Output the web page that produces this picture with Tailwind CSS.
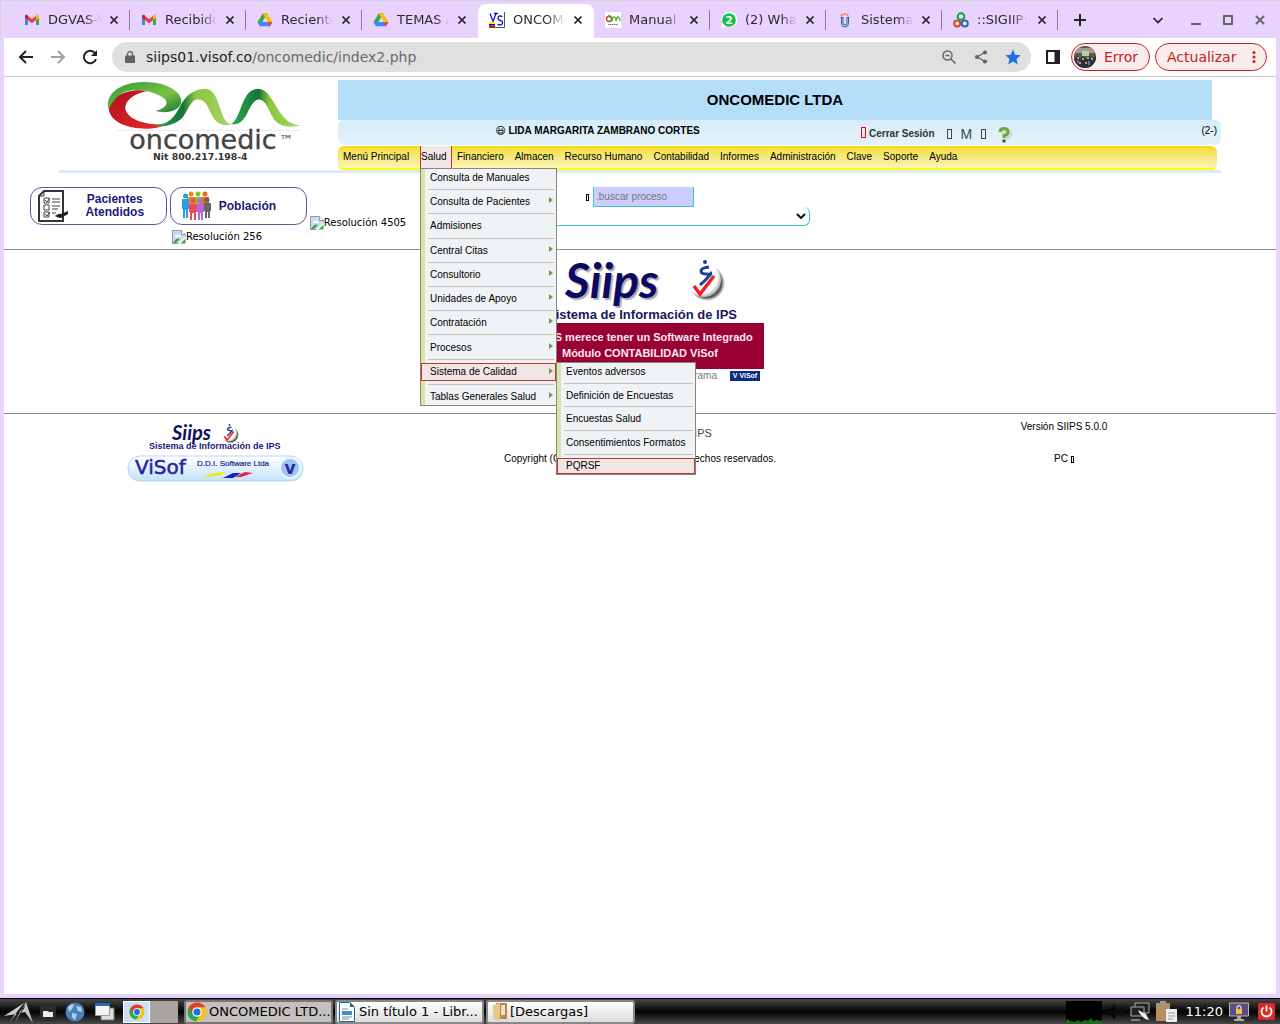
<!DOCTYPE html>
<html lang="es">
<head>
<meta charset="utf-8">
<meta name="viewport" content="width=device-width, initial-scale=1">
<title>ONCOMEDIC LTDA</title>
<script src="https://cdn.jsdelivr.net/npm/@tailwindcss/browser@4"></script>
</head>
<body class="min-h-screen flex flex-col bg-[#e8d3ff] font-['DejaVu_Sans',sans-serif] text-black">

<!-- Shared symbols -->
<svg class="absolute size-0" aria-hidden="true">
  <defs>
    <linearGradient id="gTop" x1="0" y1="0" x2="1" y2="1"><stop offset="0" stop-color="#2f9a3c"/><stop offset=".6" stop-color="#7cc242"/><stop offset="1" stop-color="#15763a"/></linearGradient>
    <linearGradient id="gRed" x1="0" y1="0" x2="1" y2="1"><stop offset="0" stop-color="#a8141c"/><stop offset="1" stop-color="#f0252c"/></linearGradient>
    <linearGradient id="gWave" x1="0" y1="0" x2="1" y2="0"><stop offset="0" stop-color="#2fae4a"/><stop offset=".4" stop-color="#14743a"/><stop offset=".55" stop-color="#8cc63f"/><stop offset="1" stop-color="#a9d468"/></linearGradient>
    <radialGradient id="gBall" cx=".4" cy=".4" r=".65"><stop offset=".75" stop-color="#fff"/><stop offset="1" stop-color="#999"/></radialGradient>
    <radialGradient id="gShade"><stop offset=".8" stop-color="#555"/><stop offset="1" stop-color="#555" stop-opacity="0"/></radialGradient>
    <linearGradient id="gPill" x1="0" y1="0" x2="0" y2="1"><stop offset="0" stop-color="#fff"/><stop offset="1" stop-color="#c3e2fb"/></linearGradient>
    <symbol id="gmail" viewBox="0 0 16 16"><path d="M1 4v9h3V8z" fill="#4285f4"/><path d="M12 8v5h3V4z" fill="#34a853"/><path d="M12 4v4l3-2.300V4.200C15 2.500 13.200 2 12 3z" fill="#fbbc04"/><path d="M4 4l4 3 4-3v4.200L8 11.200 4 8.200z" fill="#ea4335"/><path d="M1 4.200v1.600L4 8V3.600C2.800 2 1 2.500 1 4.200z" fill="#c5221f"/></symbol>
    <symbol id="drive" viewBox="0 0 16 16"><path d="M5.600 1.500h4.800L5.500 10 3 14 .6 10z" fill="#34a853"/><path d="M5.600 1.500h4.800l5 8.500h-4.600z" fill="#fbbc04"/><path d="M.6 10h14.800L13 14.300H3z" fill="#4285f4"/><path d="M10.800 10h4.600L13 14.300z" fill="#ea4335"/><path d="M8 5.800l2.500 4.200h-5z" fill="#e8d3ff"/></symbol>
    <symbol id="close" viewBox="0 0 10 10"><path d="M1.500 1.500l7 7M8.500 1.500l-7 7" stroke="#202124" stroke-width="1.700"/></symbol>
    <symbol id="chrome" viewBox="0 0 20 20"><circle cx="10" cy="10" r="9.500" fill="#fbc116"/><path d="M10 10L1.800 5.200A9.500 9.500 0 0 0 9 19.500L13.500 12z" fill="#2da94f"/><path d="M1.800 5.200A9.500 9.500 0 0 1 18.200 5.200H10L6 12z" fill="#e33b2e"/><circle cx="10" cy="10" r="4.800" fill="#fff"/><circle cx="10" cy="10" r="3.600" fill="#1a73e8"/></symbol>
    <symbol id="broken" viewBox="0 0 14 14"><path d="M.5.5h9l4 4v9H.5z" fill="#c6dcf7" stroke="#999"/><path d="M9.500.5v4h4" fill="#fff" stroke="#999"/><path d="M3 7q0-2 2-2 2-1 3 1 1 0 1 1z" fill="#fff"/><path d="M1 13q3-6 7-4l-4 4z" fill="#4ba13c"/><path d="M14 6L6 14h8z" fill="#fff"/><path d="M8.500 13.500h5v-5z" fill="#4ba13c"/></symbol>
    <symbol id="ball" viewBox="0 0 40 44"><circle cx="22" cy="25" r="18" fill="url(#gShade)"/><circle cx="19" cy="22" r="17" fill="url(#gBall)"/><circle cx="20" cy="4" r="2" fill="#1d3f94"/><path d="M24 9q-8 1-8 4t6 3-7 11M24 18q3-2 1-4" fill="none" stroke="#1d3f94" stroke-width="3"/><path d="M9 28l6 8 14-18" fill="none" stroke="#ee2024" stroke-width="3.500"/></symbol>
    <symbol id="arrow" viewBox="0 0 4 6"><path d="M0 0l4 3-4 3z" fill="#6d9c4a"/></symbol>
  </defs>
</svg>

<!-- Tab strip -->
<header class="flex h-[38px] border-t border-l border-[#d4d4d8] pl-[13px] text-[13px] text-[#2c2830]">
  <div class="flex h-[37px] grow items-center">
    <div class="flex h-10 w-[116px] items-center pl-[10px] relative"><svg class="size-4 shrink-0"><use href="#gmail"/></svg><span class="ml-2 w-[53px] overflow-hidden whitespace-nowrap [mask-image:linear-gradient(to_right,black_70%,transparent)]">DGVAS-V</span><button aria-label="Cerrar pestaña" class="ml-2"><svg class="size-[10px]"><use href="#close"/></svg></button><i class="absolute right-0 h-5 w-px bg-[#8a7a98]"></i></div>
    <div class="flex h-10 w-[116px] items-center pl-[11px] relative"><svg class="size-4 shrink-0"><use href="#gmail"/></svg><span class="ml-2 w-[52px] overflow-hidden whitespace-nowrap [mask-image:linear-gradient(to_right,black_70%,transparent)]">Recibido</span><button aria-label="Cerrar pestaña" class="ml-2"><svg class="size-[10px]"><use href="#close"/></svg></button><i class="absolute right-0 h-5 w-px bg-[#8a7a98]"></i></div>
    <div class="flex h-10 w-[116px] items-center pl-[11px] relative"><svg class="size-4 shrink-0"><use href="#drive"/></svg><span class="ml-2 w-[52px] overflow-hidden whitespace-nowrap [mask-image:linear-gradient(to_right,black_70%,transparent)]">Reciente</span><button aria-label="Cerrar pestaña" class="ml-2"><svg class="size-[10px]"><use href="#close"/></svg></button><i class="absolute right-0 h-5 w-px bg-[#8a7a98]"></i></div>
    <div class="flex h-10 w-[116px] items-center pl-[11px] relative"><svg class="size-4 shrink-0"><use href="#drive"/></svg><span class="ml-2 w-[52px] overflow-hidden whitespace-nowrap [mask-image:linear-gradient(to_right,black_75%,transparent)]">TEMAS A</span><button aria-label="Cerrar pestaña" class="ml-2"><svg class="size-[10px]"><use href="#close"/></svg></button></div>
    <div class="flex h-[34px] w-[116px] items-center self-end rounded-t-lg bg-white pl-[11px] pb-[2px]"><svg class="size-4 shrink-0" viewBox="0 0 16 16"><path d="M15.500 0v15.500H0" fill="none" stroke="#555"/><path d="M1 1.500l3 8 3-8M5 1.500h4" fill="none" stroke="#1414c8" stroke-width="1.300"/><path d="M13.500 4.500Q9 3 9 6q0 2 2.500 2.500T13.500 11q0 2.500-5 1.500" fill="none" stroke="#1414c8" stroke-width="1.300"/><path d="M0 10h6v2H0z" fill="#fe0"/><path d="M0 12h6v1.500H0z" fill="#00c"/><path d="M0 13.500h6V15H0z" fill="#e00"/></svg><span class="ml-2 w-[52px] overflow-hidden whitespace-nowrap [mask-image:linear-gradient(to_right,black_65%,transparent)]">ONCOME</span><button aria-label="Cerrar pestaña" class="ml-2"><svg class="size-[10px]"><use href="#close"/></svg></button></div>
    <div class="flex h-10 w-[116px] items-center pl-[11px] relative"><svg class="size-4 shrink-0" viewBox="0 0 16 16"><path d="M0 0h16v16H0z" fill="#fff"/><circle cx="4" cy="7" r="2.500" fill="none" stroke="#c33" stroke-width="1.400"/><path d="M3 4q3-1 4 2t-2 3M7 9q1-5 2.500-4t1.500 4q1-5 2.500-4T15 9" fill="none" stroke="#5a3" stroke-width="1.400"/><path d="M3 12.500h10" stroke="#777" stroke-dasharray="1.500 .5"/></svg><span class="ml-2 w-[52px] overflow-hidden whitespace-nowrap [mask-image:linear-gradient(to_right,black_70%,transparent)]">Manual d</span><button aria-label="Cerrar pestaña" class="ml-2"><svg class="size-[10px]"><use href="#close"/></svg></button><i class="absolute right-0 h-5 w-px bg-[#8a7a98]"></i></div>
    <div class="flex h-10 w-[116px] items-center pl-[11px] relative"><svg class="size-4 shrink-0" viewBox="0 0 16 16"><path d="M0 16l1.500-5A7.800 7.800 0 1 1 5 14.500z" fill="#fff"/><circle cx="8" cy="8" r="6.800" fill="#0ec443"/><text x="8" y="12" text-anchor="middle" font-size="11" font-weight="700" fill="#fff" font-family="DejaVu Sans">2</text></svg><span class="ml-2 w-[52px] overflow-hidden whitespace-nowrap [mask-image:linear-gradient(to_right,black_70%,transparent)]">(2) What</span><button aria-label="Cerrar pestaña" class="ml-2"><svg class="size-[10px]"><use href="#close"/></svg></button><i class="absolute right-0 h-5 w-px bg-[#8a7a98]"></i></div>
    <div class="flex h-10 w-[116px] items-center pl-[11px] relative"><svg class="size-4 shrink-0" viewBox="0 0 16 16"><path d="M4 4q4-4 8 0" fill="none" stroke="#f08040" stroke-width="2" stroke-dasharray="2 1"/><path d="M3.500 5.500h2.500V11q0 2 2 2t2-2V5.500h2.500M4.500 6v5q0 4 3.500 4t3.500-4V6" fill="none" stroke="#2e6390"/></svg><span class="ml-2 w-[52px] overflow-hidden whitespace-nowrap [mask-image:linear-gradient(to_right,black_70%,transparent)]">Sistema</span><button aria-label="Cerrar pestaña" class="ml-2"><svg class="size-[10px]"><use href="#close"/></svg></button><i class="absolute right-0 h-5 w-px bg-[#8a7a98]"></i></div>
    <div class="flex h-10 w-[116px] items-center pl-[11px] relative"><svg class="size-4 shrink-0" viewBox="0 0 16 16"><circle cx="8" cy="4.500" r="3.300" fill="#dfd" stroke="#1a9a50" stroke-width="2"/><circle cx="4.200" cy="11.500" r="3" fill="#fdd" stroke="#c8502a" stroke-width="2"/><circle cx="11.800" cy="11.500" r="3" fill="#def" stroke="#2868b0" stroke-width="2"/></svg><span class="ml-2 w-[52px] overflow-hidden whitespace-nowrap [mask-image:linear-gradient(to_right,black_65%,transparent)]">::SIGIIP::</span><button aria-label="Cerrar pestaña" class="ml-2"><svg class="size-[10px]"><use href="#close"/></svg></button><i class="absolute right-0 h-5 w-px bg-[#8a7a98]"></i></div>
    <button aria-label="Nueva pestaña" class="ml-4"><svg class="size-3" viewBox="0 0 12 12"><path d="M6 0v12M0 6h12" stroke="#202124" stroke-width="2"/></svg></button>
  </div>
  <div class="flex items-center gap-[22px] pr-[15px]">
    <button aria-label="Buscar pestañas"><svg class="h-[10px] w-3" viewBox="0 0 12 10"><path d="M1.500 3L6 7.500 10.500 3" fill="none" stroke="#202124" stroke-width="1.700"/></svg></button>
    <button aria-label="Minimizar" class="ml-[5px]"><svg class="h-[10px] w-[10px]" viewBox="0 0 10 10"><path d="M0 9h10" stroke="#666" stroke-width="2"/></svg></button>
    <button aria-label="Maximizar"><svg class="size-[10px]" viewBox="0 0 10 10"><path d="M1 1h8v8H1z" fill="none" stroke="#666" stroke-width="2"/></svg></button>
    <button aria-label="Cerrar"><svg class="size-[10px]" viewBox="0 0 10 10"><path d="M1 1l8 8M9 1L1 9" stroke="#666" stroke-width="2"/></svg></button>
  </div>
</header>

<div class="mx-1 mb-1 flex grow flex-col bg-white">
  <!-- Address bar -->
  <div class="flex h-[39px] items-center border-b border-[#c8c8c8] pl-[14px] pr-[9px] text-sm">
    <button aria-label="Atrás"><svg class="size-4" viewBox="0 0 16 16"><path d="M15 8H2.500M8 2L2 8l6 6" fill="none" stroke="#202124" stroke-width="2"/></svg></button>
    <button aria-label="Adelante" class="ml-4"><svg class="size-4" viewBox="0 0 16 16"><path d="M1 8h12.500M8 2l6 6-6 6" fill="none" stroke="#a0a0a4" stroke-width="2"/></svg></button>
    <button aria-label="Recargar" class="ml-4"><svg class="size-4" viewBox="0 0 16 16"><path d="M13 4.200A6.200 6.200 0 1 0 14 10" fill="none" stroke="#202124" stroke-width="2"/><path d="M15 1v6H9z" fill="#202124"/></svg></button>
    <div class="ml-[14px] flex h-[30px] grow items-center rounded-full bg-[#e0e0e0] pl-[13px] pr-[10px]">
      <svg class="h-3 w-[10px]" viewBox="0 0 10 12"><path d="M1 4.500h8q1 0 1 1V11q0 1-1 1H1q-1 0-1-1V5.500q0-1 1-1z" fill="#5f6368"/><path d="M2.500 5V3.200a2.500 2.500 0 0 1 5 0V5" fill="none" stroke="#5f6368" stroke-width="1.300"/></svg>
      <span class="ml-[11px] grow text-[#202124]">siips01.visof.co<span class="text-[#666a6e]">/oncomedic/index2.php</span></span>
      <button aria-label="Zoom"><svg class="size-[14px]" viewBox="0 0 14 14"><circle cx="5.500" cy="5.500" r="4.500" fill="none" stroke="#666" stroke-width="1.500"/><path d="M3.500 5.500h4M9 9l4.500 4.500" stroke="#666" stroke-width="1.500"/></svg></button>
      <button aria-label="Compartir" class="ml-[18px]"><svg class="size-[14px]" viewBox="0 0 14 14"><path d="M11 2.500L3 7l8 4.500" fill="none" stroke="#5f6368" stroke-width="1.300"/><circle cx="11" cy="2.500" r="2.100" fill="#5f6368"/><circle cx="3" cy="7" r="2.100" fill="#5f6368"/><circle cx="11" cy="11.500" r="2.100" fill="#5f6368"/></svg></button>
      <button aria-label="Favorito" class="ml-[17px]"><svg class="size-4" viewBox="0 0 16 16"><path d="M8 .5l2.200 5.200 5.500.5-4.200 3.700 1.300 5.600L8 12.600l-4.800 2.900 1.300-5.600L.3 6.200l5.500-.5z" fill="#1a73e8"/></svg></button>
    </div>
    <button aria-label="Panel lateral" class="ml-[15px]"><svg class="h-[14px] w-[14px]" viewBox="0 0 14 14"><path d="M1 1h12v12H1z" fill="none" stroke="#202124" stroke-width="2"/><path d="M8.500 1H13v12H8.500z" fill="#202124"/></svg></button>
    <button class="ml-[11px] flex h-7 w-[79px] items-center rounded-full border border-[#c5221f] bg-[#faecec] pl-[2px] text-[#c5221f]"><svg class="size-[22px]" viewBox="0 0 22 22"><clipPath id="av"><circle cx="11" cy="11" r="11"/></clipPath><g clip-path="url(#av)"><path d="M0 0h22v22H0z" fill="#5b5750"/><path d="M0 2h22v5H0z" fill="#a39a94"/><path d="M8 5h7v5H8z" fill="#a9d8a0"/><path d="M0 13l3-3 3 3 3-3 3 3 3-3 3 3 4-3v12H0z" fill="#2c3038"/><path d="M3 11h2v2H3zM8 12h2v2H8zM13 11h2v2h-2zM17 12h2v2h-2zM5 16h2v2H5zM11 16h2v2h-2z" fill="#c99a80"/><path d="M3 14h2v3H3zM14 15h2v4h-2z" fill="#4a79b8"/></g></svg><span class="ml-2">Error</span></button>
    <button class="ml-[5px] flex h-7 w-28 items-center justify-between rounded-full border border-[#c5221f] bg-[#faecec] pl-[11px] pr-[10px] text-[#c5221f]">Actualizar<svg class="h-3 w-1" viewBox="0 0 4 12"><circle cx="2" cy="1.600" r="1.500" fill="#c5221f"/><circle cx="2" cy="6" r="1.500" fill="#c5221f"/><circle cx="2" cy="10.400" r="1.500" fill="#c5221f"/></svg></button>
  </div>

  <main class="font-['Liberation_Sans',Arial,sans-serif] text-[10px] leading-[12px]">
    <!-- Banner -->
    <div class="mx-[55px] mt-[3px] grid grid-cols-[279px_1fr] border-b-[3px] border-[#d6ecf9]">
      <div class="flex h-[88px] justify-center pl-[10px]">
        <svg class="h-[84px] w-[200px]" viewBox="160 12 600 252" role="img" aria-label="oncomedic">
          <path d="M174 95C180 60 235 36 292 45C245 52 217 80 226 105C240 135 290 148 350 145C325 158 290 160 265 157C210 150 176 130 174 95Z" fill="url(#gRed)"/>
          <path d="M174 100C160 58 205 20 275 18C350 16 395 50 392 78C388 105 345 115 315 104C348 98 358 78 335 64C300 40 240 34 210 54C192 68 182 82 174 100Z" fill="url(#gTop)"/>
          <path d="M300 150C360 145 370 125 392 84C410 50 440 38 465 38C510 40 505 140 542 145C520 152 505 145 491 130C470 95 468 70 440 70C420 72 415 100 395 125C375 145 340 155 300 150Z" fill="url(#gWave)"/>
          <path d="M540 145C575 125 570 40 622 38C675 40 675 145 750 148C720 155 690 155 670 130C650 100 650 75 625 70C600 75 595 110 578 130C565 146 555 145 540 145Z" fill="url(#gWave)"/>
          <path d="M200 163h550" stroke="#ededed" stroke-width="4"/>
          <text x="236" y="219" font-size="81" font-family="DejaVu Sans" fill="#444" stroke="#444" stroke-width="1">oncomedic</text>
          <text x="686" y="206" font-size="42" font-family="DejaVu Sans" fill="#444">™</text>
          <text x="307" y="252" font-size="28" font-weight="700" font-family="DejaVu Sans" fill="#333">Nit 800.217.198-4</text>
        </svg>
      </div>
      <div>
        <h1 class="mr-[9px] flex h-10 items-center justify-center bg-[#b5def8] text-[15px] font-bold">ONCOMEDIC LTDA</h1>
        <div class="grid h-[25px] grid-cols-[519px_1fr_auto] rounded-md bg-linear-to-b from-[#d6ecf8] to-[#e5f3fa] pr-1 pt-[5px]">
          <div class="text-center font-bold"><span class="font-['DejaVu_Sans'] font-normal">😃</span> LIDA MARGARITA ZAMBRANO CORTES</div>
          <div class="flex h-[18px] items-center pl-1 text-[#333]">
            <a href="#" class="flex items-center font-bold"><span class="mb-1 mr-[3px] h-[11px] w-[5px] border border-[#ff0000]"></span>Cerrar Sesión</a>
            <span class="ml-3 h-[10px] w-[5px] border border-[#444]"></span>
            <a href="#" class="ml-[9px] text-[14px] text-[#34495e]">M</a>
            <span class="ml-[9px] h-[10px] w-[5px] border border-[#444]"></span>
            <a href="#" aria-label="Ayuda" class="ml-3 mt-[3px]"><svg class="h-[17px] w-4" viewBox="0 0 16 17"><path d="M2 5q0-3.500 4-3.500t4 3.300-4 4V11" fill="none" stroke="#d3dad6" stroke-width="3" transform="translate(3 2)"/><path d="M2 5q0-3.500 4-3.500t4 3.300-4 4V11" fill="none" stroke="#6aa83a" stroke-width="3"/><path d="M4.500 12.500h3v3h-3z" fill="#35552a"/></svg></a>
          </div>
          <div>(2-)</div>
        </div>
        <nav class="mr-1 mt-px flex h-6 rounded-md border-b-2 border-[#ffff00] bg-linear-to-b from-[#f4dc00] to-[#fbf3b8] leading-[22px]">
          <a href="#" class="ml-[5px] w-[77px]">Menú Principal</a>
          <div class="relative w-8 border-x border-[#c0392b] bg-[#f1e6e6]">
            <a href="#">Salud</a>
            <!-- Salud drop-down -->
            <ul class="absolute -left-px top-[22px] z-10 flex h-[238px] w-[137px] flex-col justify-between border border-[#8a8479] bg-linear-to-r from-[#d8e6ae] from-[4px] to-[#f0f3f5] to-[4px] leading-[17px]">
              <li><a href="#" class="block pl-[9px]">Consulta de Manuales</a></li>
              <li class="ml-[7px] mr-[2px] h-px bg-[#c4c0b8]"></li>
              <li><a href="#" class="flex justify-between pl-[9px] pr-[3px]">Consulta de Pacientes<svg class="mt-1 h-[6px] w-1"><use href="#arrow"/></svg></a></li>
              <li class="ml-[7px] mr-[2px] h-px bg-[#c4c0b8]"></li>
              <li><a href="#" class="block pl-[9px]">Admisiones</a></li>
              <li class="ml-[7px] mr-[2px] h-px bg-[#c4c0b8]"></li>
              <li><a href="#" class="flex justify-between pl-[9px] pr-[3px]">Central Citas<svg class="mt-1 h-[6px] w-1"><use href="#arrow"/></svg></a></li>
              <li class="ml-[7px] mr-[2px] h-px bg-[#c4c0b8]"></li>
              <li><a href="#" class="flex justify-between pl-[9px] pr-[3px]">Consultorio<svg class="mt-1 h-[6px] w-1"><use href="#arrow"/></svg></a></li>
              <li class="ml-[7px] mr-[2px] h-px bg-[#c4c0b8]"></li>
              <li><a href="#" class="flex justify-between pl-[9px] pr-[3px]">Unidades de Apoyo<svg class="mt-1 h-[6px] w-1"><use href="#arrow"/></svg></a></li>
              <li class="ml-[7px] mr-[2px] h-px bg-[#c4c0b8]"></li>
              <li><a href="#" class="flex justify-between pl-[9px] pr-[3px]">Contratación<svg class="mt-1 h-[6px] w-1"><use href="#arrow"/></svg></a></li>
              <li class="ml-[7px] mr-[2px] h-px bg-[#c4c0b8]"></li>
              <li><a href="#" class="flex justify-between pl-[9px] pr-[3px]">Procesos<svg class="mt-1 h-[6px] w-1"><use href="#arrow"/></svg></a></li>
              <li class="ml-[7px] mr-[2px] h-px bg-[#c4c0b8]"></li>
              <li class="relative"><a href="#" class="flex justify-between border border-[#c0392b] bg-[#f1e6e6] pl-[8px] pr-[2px] leading-[16px]">Sistema de Calidad<svg class="mt-1 h-[6px] w-1"><use href="#arrow"/></svg></a>
                <ul class="absolute -top-px left-full flex h-[113px] w-[140px] flex-col justify-between border border-[#8a8479] bg-linear-to-r from-[#d8e6ae] from-[4px] to-[#f0f3f5] to-[4px] leading-[17px]">
                  <li><a href="#" class="block pl-[9px]">Eventos adversos</a></li>
                  <li class="ml-[7px] mr-[2px] h-px bg-[#c4c0b8]"></li>
                  <li><a href="#" class="block pl-[9px]">Definición de Encuestas</a></li>
                  <li class="ml-[7px] mr-[2px] h-px bg-[#c4c0b8]"></li>
                  <li><a href="#" class="block pl-[9px]">Encuestas Salud</a></li>
                  <li class="ml-[7px] mr-[2px] h-px bg-[#c4c0b8]"></li>
                  <li><a href="#" class="block pl-[9px]">Consentimientos Formatos</a></li>
                  <li class="ml-[7px] mr-[2px] h-px bg-[#c4c0b8]"></li>
                  <li><a href="#" class="block border border-[#c0392b] bg-[#f1e6e6] pl-[8px] leading-[14px]">PQRSF</a></li>
                </ul>
              </li>
              <li class="ml-[7px] mr-[2px] h-px bg-[#c4c0b8]"></li>
              <li><a href="#" class="flex justify-between pl-[9px] pr-[3px]">Tablas Generales Salud<svg class="mt-1 h-[6px] w-1"><use href="#arrow"/></svg></a></li>
            </ul>
          </div>
          <div class="ml-[5px] flex gap-[11px]">
            <a href="#">Financiero</a><a href="#">Almacen</a><a href="#">Recurso Humano</a><a href="#">Contabilidad</a><a href="#">Informes</a><a href="#">Administración</a><a href="#">Clave</a><a href="#">Soporte</a><a href="#">Ayuda</a>
          </div>
        </nav>
      </div>
    </div>

    <!-- Shortcuts and process search -->
    <section class="grid h-[77px] grid-cols-3 border-b border-[#8f8f8f] pt-[14px]">
      <div class="flex flex-col items-center font-['DejaVu_Sans',sans-serif]">
        <div class="flex items-end gap-[3px] pl-1">
          <a href="#" class="flex h-[38px] w-[137px] items-center rounded-xl border border-[#5a5a9c] pl-[6px] pr-1 font-['Liberation_Sans',sans-serif] text-[12px] font-bold leading-[13px] text-[#1a1a78]"><svg class="h-8 w-[31px]" viewBox="0 0 31 32"><path d="M7 1h19v30H2V6z" fill="#fff" stroke="#333" stroke-width="2"/><path d="M2 6h5V1" fill="none" stroke="#333"/><path d="M7 8h5v5H7zM7 15h5v5H7zM7 22h5v5H7z" fill="none" stroke="#444"/><path d="M8 10l2 2 3-4M8 24l2 2 3-4M15 9h8M15 12h8M15 16h8M15 19h6M15 23h4" fill="none" stroke="#444"/><path d="M18 26q4-3 6-2l7-3v3l-7 4q-3 0-6-2z" fill="#222"/></svg><span class="grow text-center">Pacientes<br>Atendidos</span></a>
          <a href="#" class="flex h-[38px] w-[137px] items-center rounded-xl border border-[#5a5a9c] pl-[10px] font-['Liberation_Sans',sans-serif] text-[12px] font-bold text-[#1a1a78]"><svg class="h-[30px] w-[31px]" viewBox="0 0 31 30"><g fill="#f08a1d"><circle cx="10" cy="3" r="2.500"/><path d="M6 6h8v8H6z"/></g><g fill="#86c226"><circle cx="17" cy="3" r="2.500"/><path d="M14 6h7v8h-7z"/></g><g fill="#f26522"><circle cx="24" cy="3" r="2.500"/><path d="M21 6h7v8h-7z"/></g><g fill="#2a9be8"><circle cx="4.500" cy="5" r="2.500"/><path d="M1 8h7v10H7v9H5v-8H4v8H2v-9H1z"/></g><g fill="#ef4a5a"><circle cx="12" cy="9.500" r="2.500"/><path d="M8 13h8v8h-1v8h-2v-7h-2v7H9v-8H8z"/></g><g fill="#b765e0"><circle cx="19" cy="10" r="2.500"/><path d="M16 13h7v8h-1v8h-2v-7h-1v7h-2v-8h-1z"/></g><g fill="#666"><circle cx="26" cy="9" r="2.500"/><path d="M23 12h7v8h-1v7h-2v-6h-1v6h-2v-7h-1z"/></g></svg><span class="ml-[7px]">Población</span></a>
          <span class="-mb-[5px] flex items-center"><svg class="size-[14px]"><use href="#broken"/></svg>Resolución 4505</span>
        </div>
        <span class="mt-[5px] flex items-center pl-[2px]"><svg class="size-[14px]"><use href="#broken"/></svg>Resolución 256</span>
      </div>
      <div class="flex flex-col items-center">
        <label class="flex items-center"><span class="mr-1 h-[7px] w-[3px] border border-black"></span><input type="text" aria-label="Buscar proceso" placeholder=".buscar proceso" class="h-5 w-[101px] border border-t-0 border-[#3cc6cf] bg-[#ccccff] px-[2px] placeholder:text-[#757575]"></label>
        <div class="relative h-[19px] w-[339px]"><select aria-label="Proceso" class="h-full w-full appearance-none rounded-md border border-t-0 border-[#3cc6cf] bg-white"><option></option></select><svg class="pointer-events-none absolute right-1 top-[6px] h-[6px] w-[10px]" viewBox="0 0 10 6"><path d="M1 1l4 4 4-4" fill="none" stroke="#111" stroke-width="2"/></svg></div>
      </div>
    </section>

    <!-- Product image -->
    <section class="flex h-[164px] justify-center border-b border-[#8f8f8f] pt-[5px]">
      <div class="flex w-[248px] flex-col">
        <div class="flex h-[51px] items-center pb-[2px] pl-[49px]"><span class="w-[120px] font-['Lato'] text-[48px] font-bold italic leading-[46px] text-[#0a0a66] [text-shadow:2px_2px_1px_#aaa]">Siips</span><svg class="h-11 w-10"><use href="#ball"/></svg></div>
        <p class="whitespace-nowrap pl-[31px] text-[13px] font-bold leading-[17px] text-[#17175c]">Sistema de Información de IPS</p>
        <div class="flex h-[46px] flex-col items-center justify-center bg-[#990033] pb-[2px] text-[11px] font-bold leading-4 text-[#ffe9f0]"><span>Su IPS merece tener un Software Integrado</span><span>Módulo CONTABILIDAD ViSof</span></div>
        <div class="flex items-center justify-end pr-1 pt-px text-[#777]"><span class="mr-[13px]">Conozca el programa</span><span class="flex h-[10px] w-[30px] items-center justify-center whitespace-nowrap bg-[#0c2c84] text-[7px] font-bold leading-[10px] text-white">V ViSof</span></div>
      </div>
    </section>

    <!-- Footer -->
    <footer class="grid grid-cols-3 text-center">
      <div class="flex flex-col items-center pt-[7px]">
        <svg class="h-[63px] w-[178px]" viewBox="0 0 178 63" role="img" aria-label="Siips ViSof">
          <text x="45" y="19" font-family="Lato" font-size="20" font-weight="700" font-style="italic" fill="#10105f">Siips</text>
          <use href="#ball" x="93" y="2" width="19" height="21"/>
          <text x="22" y="28" font-family="Liberation Sans" font-size="9" font-weight="700" fill="#17177a">Sistema de Información de IPS</text>
          <rect x="1" y="35" width="175" height="25" rx="12" fill="url(#gPill)" stroke="#b4d6f2"/>
          <text x="8" y="53" font-family="DejaVu Sans" font-size="20" fill="#2323a8" stroke="#2323a8" stroke-width=".5">ViSof</text>
          <text x="70" y="45" font-family="Liberation Sans" font-size="8" fill="#22229a" stroke="#22229a" stroke-width=".2">D.D.I. Software Ltda</text>
          <path d="M74 57q12-6 24-6l-4 3z" fill="#f8e800"/><path d="M96 57l10-5h8l-8 5z" fill="#1b1bd0"/><path d="M108 56l10-5 8 1-12 4z" fill="#e8242c"/>
          <circle cx="163" cy="47" r="10" fill="#9cc4f0" stroke="#e8f4ff" stroke-width="2"/>
          <text x="163" y="53" text-anchor="middle" font-family="DejaVu Sans" font-size="17" font-weight="700" fill="#2a2aa0">v</text>
        </svg>
      </div>
      <div class="pt-[13px]"><p class="pr-2 text-[11px] text-[#444]">Sistema de Información de IPS</p><p class="mt-[14px]">Copyright (C) 2005-10 ViSof. Todos los derechos reservados.</p></div>
      <div class="pt-[7px]"><p>Versión SIIPS 5.0.0</p><p class="mt-5 flex items-center justify-center gap-[3px]">PC <span class="h-[7px] w-[3px] border border-black"></span></p></div>
    </footer>
  </main>
</div>

<!-- Desktop panel -->
<div class="flex h-[26px] items-center border-t border-black bg-linear-to-b from-[#4a4a4a] via-[#050505] to-[#4a4a4a] text-[13px]">
  <svg class="ml-1 h-[22px] w-[30px]" viewBox="0 0 30 22"><path d="M0 15L20 2 6 20 16 10 11 22 22 1l7 21-8-11-4 1 5-8-9 9z" fill="#c8c8c8"/></svg>
  <svg class="ml-[6px] h-5 w-4" viewBox="0 0 16 20"><rect y="1" width="16" height="18" rx="2" fill="#2b2b2b"/><path d="M3 9h5l1 1h4v5H3z" fill="#eee"/></svg>
  <svg class="ml-[9px] size-5" viewBox="0 0 20 20"><circle cx="10" cy="10" r="9.500" fill="#4a80bc"/><path d="M3 5q4-4 6-2l-2 4-3 3zM11 4l5 1 1 5-4-1zM7 11l5 1-2 6-3-3z" fill="#b4d0ec"/></svg>
  <svg class="ml-[10px] h-[18px] w-5" viewBox="0 0 20 18"><path d="M6 5h13v12H6z" fill="#ddd" stroke="#777"/><path d="M.5.5h14v12H.5z" fill="#f4f4f4" stroke="#9a9a9a"/><path d="M0 0h15v3H0z" fill="#2a66b8"/></svg>
  <div class="ml-2 flex h-[22px] w-[55px] bg-[#a8a4a2]"><span class="flex w-[27px] items-center justify-center border border-white bg-[#ccdff5]"><svg class="size-4"><use href="#chrome"/></svg></span></div>
  <button class="ml-[6px] flex h-6 w-[149px] items-center rounded-[3px] border-2 border-[#777] bg-[#c4c0bd] pl-px"><svg class="size-5 shrink-0"><use href="#chrome"/></svg><span class="ml-[2px] whitespace-nowrap">ONCOMEDIC LTD...</span></button>
  <button class="ml-[2px] flex h-6 w-[149px] items-center rounded-[3px] border-2 border-[#888] bg-linear-to-b from-white to-[#dcdcdc] pl-[2px]"><svg class="h-5 w-4 shrink-0" viewBox="0 0 16 20"><path d="M.5.500h10l5 5v14H.5z" fill="#fff" stroke="#1c6a9c"/><path d="M11 0l5 5h-5z" fill="#1c6a9c"/><path d="M3 7h6M3 15h10M3 17h7" stroke="#888"/><path d="M3 9h10v4H3z" fill="#3f94bd"/></svg><span class="ml-1 whitespace-nowrap">Sin título 1 - Libr...</span></button>
  <button class="ml-[2px] flex h-6 w-[149px] items-center rounded-[3px] border-2 border-[#888] bg-linear-to-b from-white to-[#dcdcdc] pl-1"><svg class="h-5 w-4 shrink-0" viewBox="0 0 16 20"><path d="M4 1h11v16H4z" fill="#b48a4c"/><path d="M1 3l7-2v18l-7-2z" fill="#e6c88c"/><path d="M9 3h4v10H9z" fill="#eee0c0"/></svg><span class="ml-[2px] whitespace-nowrap">[Descargas]</span></button>
  <div class="ml-auto flex items-center pr-[5px]">
    <svg class="h-[22px] w-9" viewBox="0 0 36 22"><path d="M0 0h36v22H0z" fill="#000"/><path d="M0 22v-2l2-2 2 2 5 1 3-2 3 2 4-2 3 1 3-3 2 3 4-1 3 1 2-1v3z" fill="#0a7a0a"/></svg>
    <svg class="ml-1 h-4 w-[18px]" viewBox="0 0 18 16"><path d="M0 5h4l5-5v16l-5-5H0z" fill="#080808"/><path d="M11 5q2 3 0 6M14 3q3 5 0 10" fill="none" stroke="#111" stroke-width="1.500"/></svg>
    <svg class="ml-[6px] size-5" viewBox="0 0 20 20"><path d="M5 1h14v10H5z" fill="#222" stroke="#aaa"/><path d="M1 5h13v9H1z" fill="#222" stroke="#aaa"/><path d="M1 18h9" stroke="#ccc"/><path d="M8 8l8 4 3 6-4-1-5-5z" fill="#eee"/></svg>
    <svg class="ml-[6px] h-[22px] w-[22px]" viewBox="0 0 22 22"><path d="M0 2h14v18H0z" fill="#b48f62"/><path d="M4 0h6v4H4z" fill="#999"/><path d="M10 8h11v13H10z" fill="#eee"/><path d="M12 12h7M12 15h7M12 18h5" stroke="#999"/></svg>
    <time class="ml-2 text-white">11:20</time>
    <svg class="ml-[6px] size-5" viewBox="0 0 20 20"><path d="M.5 1h19v13H.5z" fill="#5b4c88" stroke="#b8b8b8"/><path d="M7 7h6v5H7z" fill="#f0c040"/><path d="M8 7V5q2-3 4 0v2" fill="none" stroke="#ddd" stroke-width="1.300"/><path d="M8 14h4v3h3v2H5v-2h3z" fill="#aaa"/></svg>
    <svg class="ml-[9px] size-[17px]" viewBox="0 0 17 17"><rect width="17" height="17" rx="2" fill="#e02828"/><path d="M5.500 4.500a5 5 0 1 0 6 0M8.500 2.500v6" fill="none" stroke="#fff" stroke-width="1.800"/></svg>
  </div>
</div>
</body>
</html>
